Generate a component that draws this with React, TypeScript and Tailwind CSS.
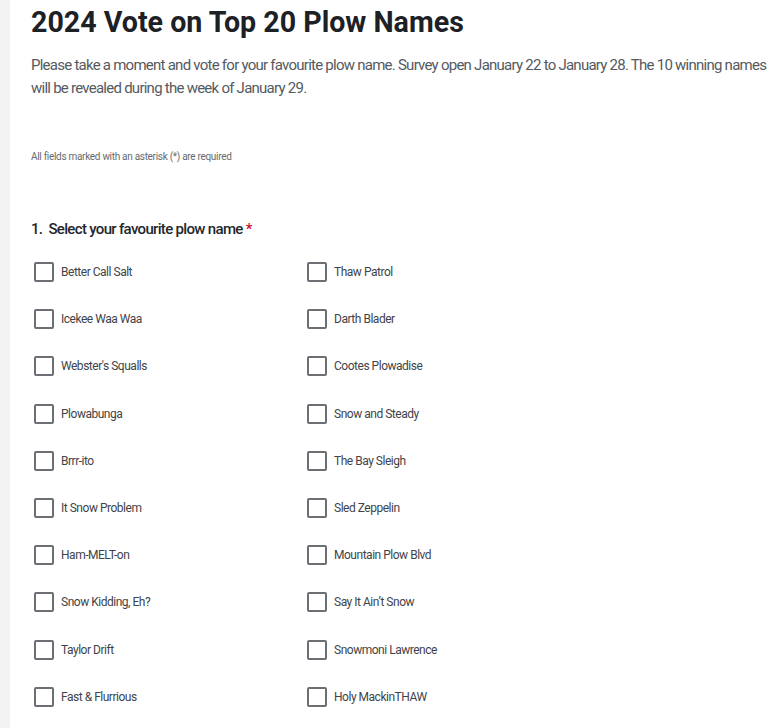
import React, { useState } from 'react';

const plowNames: string[] = [
  'Better Call Salt',
  'Thaw Patrol',
  'Icekee Waa Waa',
  'Darth Blader',
  "Webster's Squalls",
  'Cootes Plowadise',
  'Plowabunga',
  'Snow and Steady',
  'Brrr-ito',
  'The Bay Sleigh',
  'It Snow Problem',
  'Sled Zeppelin',
  'Ham-MELT-on',
  'Mountain Plow Blvd',
  'Snow Kidding, Eh?',
  'Say It Ain\u2019t Snow',
  'Taylor Drift',
  'Snowmoni Lawrence',
  'Fast & Flurrious',
  'Holy MackinTHAW',
];

const App = () => {
  const [picked, setPicked] = useState<string[]>([]);

  const toggle = (name: string) => {
    setPicked((prev) => (prev.includes(name) ? prev.filter((n) => n !== name) : [...prev, name]));
  };

  return (
    <div className="min-h-[728px] bg-[#f3f3f3] pl-[10px] font-['Roboto',sans-serif]">
      <main className="min-h-[728px] bg-white pl-[21px] pr-[4px]">
        <h1 className="pt-[4px] text-[28.6px] leading-[36px] font-bold text-[#1d2125]">
          2024 Vote on Top 20 Plow Names
        </h1>
        <p className="mt-[14px] text-[15px] leading-[23px] tracking-[-0.05em] text-[#555a5f]">
          Please take a moment and vote for your favourite plow name. Survey open January 22 to January 28. The 10
          winning names will be revealed during the week of January 29.
        </p>

        <p className="mt-[50px] text-[10px] leading-[14px] tracking-[-0.03em] text-[#666b70]">
          All fields marked with an asterisk (*) are required
        </p>

        <fieldset className="mt-[55px]">
          <legend className="text-[15px] leading-[20px] font-medium tracking-[-0.045em] text-[#23272b]">
            1.&nbsp; Select your favourite plow name <span className="text-[#c8102e]">*</span>
          </legend>
          <div className="mt-[23px] grid grid-cols-[273px_1fr] gap-y-[27.2px] pl-[3px]">
            {plowNames.map((name) => (
              <label key={name} className="flex h-[20px] cursor-pointer items-center gap-[7px]">
                <input
                  type="checkbox"
                  checked={picked.includes(name)}
                  onChange={() => toggle(name)}
                  className="h-[20px] w-[20px] appearance-none rounded-[2px] border-2 border-[#6b6f73] bg-white checked:bg-[#2b5f9e]"
                />
                <span className="text-[12px] tracking-[-0.04em] text-[#3f4448]">{name}</span>
              </label>
            ))}
          </div>
        </fieldset>
      </main>
    </div>
  );
};

export default App;
